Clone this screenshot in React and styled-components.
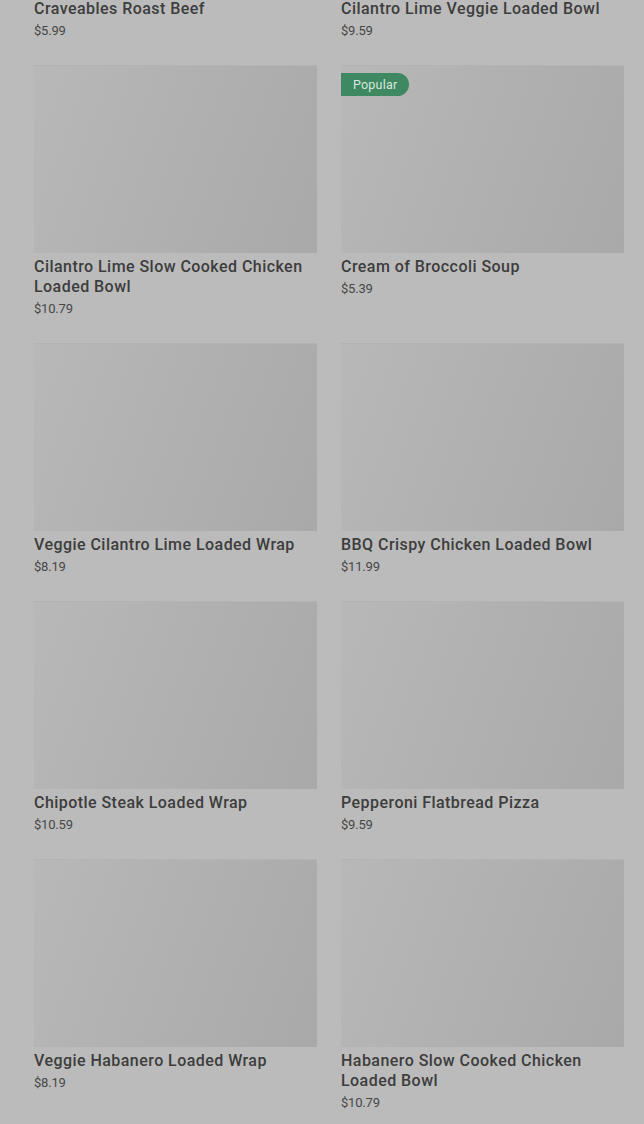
import React from "react";
import styled, { createGlobalStyle } from "styled-components";

const Global = createGlobalStyle`
  html, body { margin: 0; padding: 0; background: #bbbbbb; }
  body { font-family: Roboto, "Liberation Sans", Arial, sans-serif; overflow: hidden; }
`;

const Page = styled.main`
  padding: 0 20px 0 34px;
  height: 1124px;
  overflow: hidden;
`;

const Grid = styled.div`
  margin-top: -193px;
  display: grid;
  grid-template-columns: 283px 283px;
  column-gap: 24px;
  row-gap: 25px;
  align-items: start;
`;

const Card = styled.article`
  display: flex;
  flex-direction: column;
`;

const Thumb = styled.div`
  position: relative;
  height: 188px;
  background: linear-gradient(110deg, #b8b8b8 0%, #b1b1b1 45%, #a9a9a9 100%);
  box-shadow: inset 0 1px 0 #b3b3b3;
`;

const Badge = styled.span`
  position: absolute;
  top: 8px;
  left: 0;
  height: 23px;
  padding: 0 12px 0 12px;
  width: 68px;
  box-sizing: border-box;
  display: flex;
  align-items: center;
  background: #3e8962;
  color: #d9e8df;
  font-size: 12.5px;
  letter-spacing: 0.2px;
  border-radius: 0 12px 12px 0;
`;

const Title = styled.h3`
  margin: 4px 0 0;
  font-size: 16px;
  line-height: 20px;
  font-weight: 500;
  color: #3d3d3d;
  letter-spacing: 0.45px;
`;

const Price = styled.div`
  margin-top: 3px;
  font-size: 13px;
  line-height: 18px;
  color: #474747;
  letter-spacing: -0.2px;
`;

const items = [
  { name: "Craveables Roast Beef", price: "$5.99" },
  { name: "Cilantro Lime Veggie Loaded Bowl", price: "$9.59" },
  { name: "Cilantro Lime Slow Cooked Chicken Loaded Bowl", price: "$10.79" },
  { name: "Cream of Broccoli Soup", price: "$5.39", popular: true },
  { name: "Veggie Cilantro Lime Loaded Wrap", price: "$8.19" },
  { name: "BBQ Crispy Chicken Loaded Bowl", price: "$11.99" },
  { name: "Chipotle Steak Loaded Wrap", price: "$10.59" },
  { name: "Pepperoni Flatbread Pizza", price: "$9.59" },
  { name: "Veggie Habanero Loaded Wrap", price: "$8.19" },
  { name: "Habanero Slow Cooked Chicken Loaded Bowl", price: "$10.79" },
];

export default function App() {
  return (
    <>
      <Global />
      <Page>
        <Grid>
          {items.map((it) => (
            <Card key={it.name}>
              <Thumb>{it.popular && <Badge>Popular</Badge>}</Thumb>
              <Title>{it.name}</Title>
              <Price>{it.price}</Price>
            </Card>
          ))}
        </Grid>
      </Page>
    </>
  );
}
